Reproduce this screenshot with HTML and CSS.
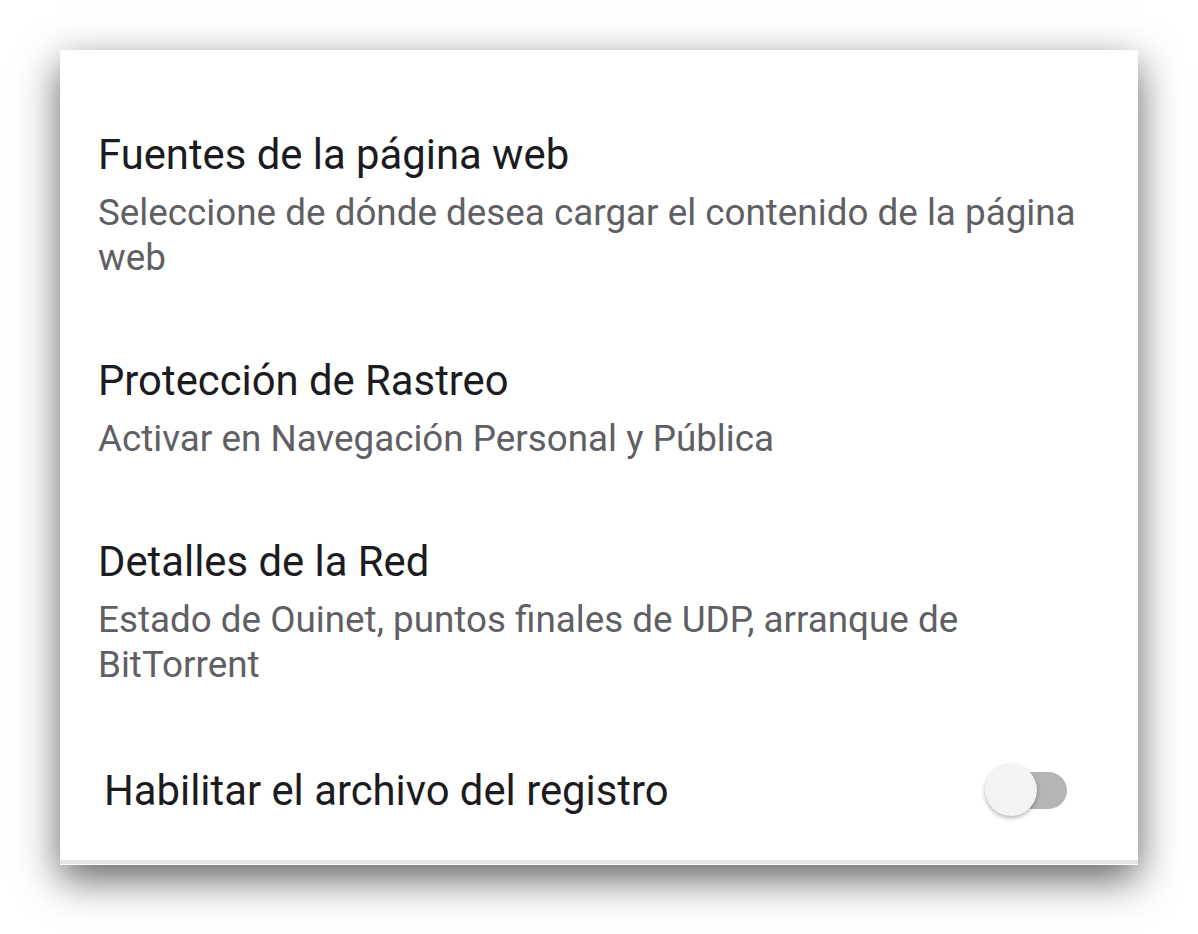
FILE: index.html
```html
<!DOCTYPE html>
<html lang="es">
<head>
<meta charset="utf-8">
<title>Ajustes</title>
<link rel="stylesheet" href="styles.css">
</head>
<body>
<div class="card">
  <div class="list">
    <div class="pref">
      <div class="pref-title">Fuentes de la página web</div>
      <div class="pref-summary">Seleccione de dónde desea cargar el contenido de la página web</div>
    </div>
    <div class="pref">
      <div class="pref-title">Protección de Rastreo</div>
      <div class="pref-summary">Activar en Navegación Personal y Pública</div>
    </div>
    <div class="pref">
      <div class="pref-title">Detalles de la Red</div>
      <div class="pref-summary">Estado de Ouinet, puntos finales de UDP, arranque de BitTorrent</div>
    </div>
    <div class="pref-switch">
      <div class="switch-title">Habilitar el archivo del registro</div>
      <div class="switch">
        <div class="track"></div>
        <div class="thumb"></div>
      </div>
    </div>
  </div>
  <div class="edge"></div>
</div>
</body>
</html>
```
FILE: styles.css
```css
html, body {
  margin: 0;
  padding: 0;
  background: #ffffff;
}
body {
  width: 1198px;
  height: 934px;
  padding: 50px 60px 0 60px;
  box-sizing: border-box;
  overflow: hidden;
  font-family: Roboto, "Noto Sans", sans-serif;
}
.card {
  width: 1078px;
  height: 815px;
  background: #ffffff;
  box-shadow: 0 14px 38px rgba(0, 0, 0, 0.62);
  display: flex;
  flex-direction: column;
}
.list {
  flex: 1;
  padding: 80px 38px 0 38px;
  display: flex;
  flex-direction: column;
}
.pref {
  padding-bottom: 76px;
}
.pref-title {
  font-size: 41.8px;
  line-height: 50px;
  color: #1b1b20;
}
.pref-summary {
  margin-top: 10px;
  font-size: 36.8px;
  line-height: 45px;
  color: #606064;
}
.pref-switch {
  height: 54px;
  display: flex;
  align-items: center;
  justify-content: space-between;
  padding: 1px 33px 0 6px;
}
.switch-title {
  font-size: 41.8px;
  line-height: 50px;
  color: #1b1b20;
}
.switch {
  position: relative;
  width: 82px;
  height: 54px;
}
.track {
  position: absolute;
  left: 6px;
  right: 0;
  top: 8px;
  height: 37px;
  border-radius: 19px;
  background: #b5b5b7;
}
.thumb {
  position: absolute;
  left: 0;
  top: 0;
  width: 52px;
  height: 52px;
  border-radius: 50%;
  background: #f3f3f3;
  box-shadow: 0 2px 4px rgba(0, 0, 0, 0.3);
}
.edge {
  height: 4px;
  background: #e4e4e4;
  border-bottom: 1px solid #ffffff;
}
```
